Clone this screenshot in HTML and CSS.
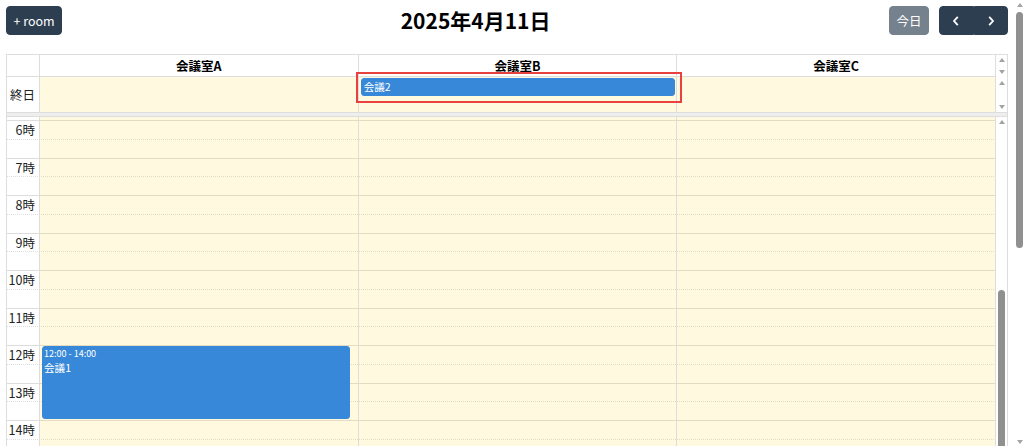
FILE: index.html
```html
<!DOCTYPE html>
<html lang="ja">
<head>
  <meta charset="UTF-8">
  <title>会議室予約</title>
  <link rel="stylesheet" href="styles.css">
</head>
<body>
<div class="page">
  <div class="cal">
    <div class="toolbar">
      <div class="tb-chunk">
        <button class="btn">+ room</button>
      </div>
      <h2 class="title">2025年4月11日</h2>
      <div class="tb-chunk">
        <button class="btn btn-today">今日</button>
        <div class="btn-group">
          <button class="btn btn-icon" title="前の日">
            <svg width="8" height="12" viewBox="0 0 8 12"><path d="M5.8 1.8 2 6l3.8 4.2" fill="none" stroke="#fff" stroke-width="1.8"/></svg>
          </button>
          <button class="btn btn-icon" title="次の日">
            <svg width="8" height="12" viewBox="0 0 8 12"><path d="M2.2 1.8 6 6l-3.8 4.2" fill="none" stroke="#fff" stroke-width="1.8"/></svg>
          </button>
        </div>
      </div>
    </div>

    <div class="grid">
      <!-- 会議室ヘッダー -->
      <div class="sec sec-head">
        <div class="row head-row">
          <div class="axis"></div>
          <div class="col col-head">会議室A</div>
          <div class="col col-head">会議室B</div>
          <div class="col col-head">会議室C</div>
        </div>
        <div class="sbar sbar-head">
          <span class="arr arr-up"></span>
          <span class="arr arr-down"></span>
        </div>
      </div>

      <!-- 終日 -->
      <div class="sec sec-allday">
        <div class="row allday-row">
          <div class="axis axis-label">終日</div>
          <div class="col col-today"></div>
          <div class="col col-today">
            <div class="ev ev-allday">会議2</div>
          </div>
          <div class="col col-today"></div>
        </div>
        <div class="sbar sbar-allday">
          <span class="arr arr-up"></span>
          <span class="arr arr-down"></span>
        </div>
      </div>
      <div class="divider"></div>

      <!-- 時間帯 -->
      <div class="sec">
        <div class="tg-scroller" id="body">
          <div class="tg">
            <div class="slots" id="slots"></div>
            <div class="tg-cols">
              <div class="tg-col">
                <div class="ev ev-timed" style="top: 451px; height: 73px;">
                  <div class="ev-time">12:00 - 14:00</div>
                  <div class="ev-title">会議1</div>
                </div>
              </div>
              <div class="tg-col"></div>
              <div class="tg-col"></div>
            </div>
          </div>
        </div>
        <div class="sbar sbar-body">
          <span class="arr arr-up"></span>
          <span class="thumb thumb-body"></span>
        </div>
      </div>

      <div class="highlight"></div>
    </div>
  </div>
</div>
<div class="page-sbar">
  <span class="arr arr-up"></span>
  <span class="thumb thumb-page"></span>
  <span class="arr arr-down arr-bottom"></span>
</div>
<script>
  // 30分ごとのスロットを作る
  var slots = document.getElementById("slots");
  for (var i = 0; i < 48; i++) {
    var row = document.createElement("div");
    row.className = i % 2 == 0 ? "slot" : "slot slot-minor";
    var label = document.createElement("div");
    label.className = "slot-label";
    if (i % 2 == 0) {
      label.innerText = (i / 2) + "時";
    }
    var lane = document.createElement("div");
    lane.className = "slot-lane";
    row.appendChild(label);
    row.appendChild(lane);
    slots.appendChild(row);
  }
  // 6時あたりまでスクロール
  document.getElementById("body").scrollTop = 222;
</script>
</body>
</html>
```

FILE: styles.css
```css
* {
  box-sizing: border-box;
}

html,
body {
  margin: 0;
  height: 100%;
  overflow: hidden;
}

body {
  display: flex;
  font-family: "Noto Sans CJK JP", "Noto Sans", sans-serif;
  font-size: 12.5px;
  color: #222;
  background: #fff;
}

.page {
  flex: 1;
  min-width: 0;
  padding: 6px 1px 0 6px;
  overflow: hidden;
}

/* ツールバー */
.toolbar {
  display: flex;
  justify-content: space-between;
  align-items: center;
  height: 29px;
  margin-bottom: 19px;
}

.tb-chunk {
  display: flex;
  align-items: center;
  gap: 10px;
}

.title {
  margin: 0;
  font-size: 21px;
  font-weight: 700;
  line-height: 29px;
  color: #000;
}

.btn {
  height: 29px;
  padding: 0 6.5px;
  border: 1px solid #2c3e50;
  border-radius: 4px;
  background: #2c3e50;
  color: #fff;
  font: inherit;
  line-height: 27px;
  cursor: pointer;
}

.btn-today {
  opacity: 0.65;
}

.btn-group {
  display: flex;
}

.btn-icon {
  width: 34.5px;
  display: flex;
  align-items: center;
  justify-content: center;
}

.btn-group .btn-icon:first-child {
  border-radius: 4px 0 0 4px;
}

.btn-group .btn-icon:last-child {
  border-radius: 0 4px 4px 0;
}

/* グリッド */
.grid {
  position: relative;
  border: 1px solid #ddd;
}

.sec {
  display: flex;
}

.row {
  flex: 1;
  display: flex;
}

.axis {
  width: 32px;
  flex: none;
}

.col {
  flex: 1;
  border-left: 1px solid #ddd;
}

.col:last-child {
  border-right: 1px solid #ddd;
}

.head-row {
  height: 22px;
  border-bottom: 1px solid #ddd;
}

.col-head {
  text-align: center;
  font-weight: 700;
  line-height: 21px;
  color: #000;
}

.allday-row {
  height: 35px;
}

.axis-label {
  display: flex;
  align-items: center;
  justify-content: flex-end;
  padding-right: 4px;
}

.col-today {
  background: #fffadf;
}

.divider {
  height: 5px;
  border-top: 1px solid #ddd;
  border-bottom: 1px solid #ddd;
  background: #eeeeee;
}

.tg-scroller {
  flex: 1;
  height: 678px;
  overflow: hidden;
}

.tg {
  position: relative;
}

.slot {
  display: flex;
  height: 18.75px;
  border-top: 1px solid #ddd;
}

.slot-minor {
  border-top-style: dotted;
}

.slot-label {
  width: 32px;
  flex: none;
  padding-right: 4px;
  text-align: right;
  line-height: 18px;
  white-space: nowrap;
}

.slot-lane {
  flex: 1;
}

.tg-cols {
  position: absolute;
  top: 0;
  bottom: 0;
  left: 32px;
  right: 0;
  display: flex;
}

.tg-col {
  flex: 1;
  position: relative;
  border-left: 1px solid #ddd;
  background: rgba(255, 220, 40, 0.15);
}

.tg-col:last-child {
  border-right: 1px solid #ddd;
}

/* スクロールバー */
.sbar {
  width: 11px;
  flex: none;
  display: flex;
  flex-direction: column;
  align-items: center;
  background: #fff;
}

.sbar-head {
  justify-content: space-between;
  padding: 3px 0 3px;
}

.sbar-allday {
  justify-content: space-between;
  padding: 4px 0 3px;
}

.sbar-body {
  padding-top: 3px;
}

.arr {
  width: 0;
  height: 0;
  border-left: 3.5px solid transparent;
  border-right: 3.5px solid transparent;
}

.arr-up {
  border-bottom: 4px solid #a3a3a3;
}

.arr-down {
  border-top: 4px solid #a3a3a3;
}

.thumb {
  width: 7px;
  flex: none;
  border-radius: 3.5px;
  background: #909090;
}

.thumb-body {
  margin-top: 166px;
  height: 490px;
}

.page-sbar {
  width: 15px;
  flex: none;
  display: flex;
  flex-direction: column;
  align-items: center;
  padding: 3px 0 2px 6px;
  background: #fff;
}

.thumb-page {
  margin-top: 5px;
  height: 236px;
}

.arr-bottom {
  margin-top: auto;
}

/* 予定 */
.ev {
  background: #3788d8;
  border: 1px solid #3788d8;
  border-radius: 3px;
  color: #fff;
  font-size: 10.6px;
}

.ev-allday {
  margin: 1px 1px 0 2px;
  height: 18px;
  padding: 0 2px;
  line-height: 16px;
}

.ev-timed {
  position: absolute;
  left: 2px;
  right: 2.5%;
  padding: 1px 1px 0;
  overflow: hidden;
}

.ev-time {
  font-size: 9px;
  line-height: 12px;
  margin-bottom: 1px;
  white-space: nowrap;
}

.ev-title {
  line-height: 14px;
}

/* 選択枠 */
.highlight {
  position: absolute;
  left: 349px;
  top: 17px;
  width: 326px;
  height: 31px;
  border: 2px solid #e8413f;
  pointer-events: none;
}
```
